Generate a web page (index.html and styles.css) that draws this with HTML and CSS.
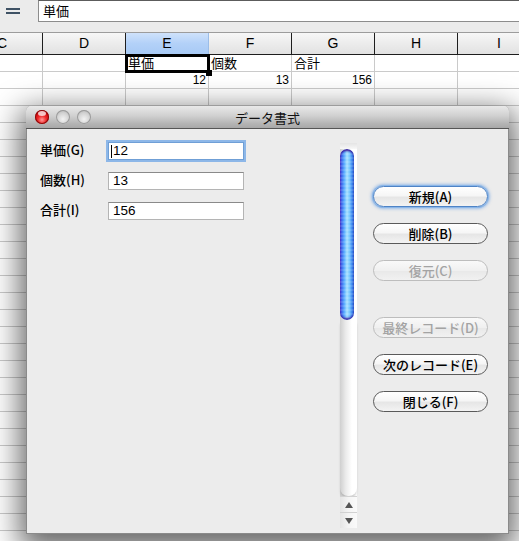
FILE: index.html
```html
<!DOCTYPE html>
<html lang="ja">
<head>
<meta charset="utf-8">
<title>データ書式</title>
<link rel="stylesheet" href="styles.css">
</head>
<body>
<div class="toolbar">
  <div class="eq"><span></span><span></span></div>
  <div class="formula">単価</div>
</div>
<div class="sheet">
  <div class="grid">
    <div class="hc">C</div><div class="hc">D</div><div class="hc sel">E</div><div class="hc">F</div><div class="hc">G</div><div class="hc">H</div><div class="hc">I</div>
    <div class="c"></div><div class="c"></div><div class="c cur">単価<span class="handle"></span></div><div class="c">個数</div><div class="c">合計</div><div class="c"></div><div class="c"></div>
    <div class="c"></div><div class="c"></div><div class="c num">12</div><div class="c num">13</div><div class="c num">156</div><div class="c"></div><div class="c"></div>
    <div class="c"></div><div class="c"></div><div class="c"></div><div class="c"></div><div class="c"></div><div class="c"></div><div class="c"></div>
    <div class="c"></div><div class="c"></div><div class="c"></div><div class="c"></div><div class="c"></div><div class="c"></div><div class="c"></div>
    <div class="c"></div><div class="c"></div><div class="c"></div><div class="c"></div><div class="c"></div><div class="c"></div><div class="c"></div>
    <div class="c"></div><div class="c"></div><div class="c"></div><div class="c"></div><div class="c"></div><div class="c"></div><div class="c"></div>
    <div class="c"></div><div class="c"></div><div class="c"></div><div class="c"></div><div class="c"></div><div class="c"></div><div class="c"></div>
    <div class="c"></div><div class="c"></div><div class="c"></div><div class="c"></div><div class="c"></div><div class="c"></div><div class="c"></div>
    <div class="c"></div><div class="c"></div><div class="c"></div><div class="c"></div><div class="c"></div><div class="c"></div><div class="c"></div>
    <div class="c"></div><div class="c"></div><div class="c"></div><div class="c"></div><div class="c"></div><div class="c"></div><div class="c"></div>
    <div class="c"></div><div class="c"></div><div class="c"></div><div class="c"></div><div class="c"></div><div class="c"></div><div class="c"></div>
    <div class="c"></div><div class="c"></div><div class="c"></div><div class="c"></div><div class="c"></div><div class="c"></div><div class="c"></div>
    <div class="c"></div><div class="c"></div><div class="c"></div><div class="c"></div><div class="c"></div><div class="c"></div><div class="c"></div>
    <div class="c"></div><div class="c"></div><div class="c"></div><div class="c"></div><div class="c"></div><div class="c"></div><div class="c"></div>
    <div class="c"></div><div class="c"></div><div class="c"></div><div class="c"></div><div class="c"></div><div class="c"></div><div class="c"></div>
    <div class="c"></div><div class="c"></div><div class="c"></div><div class="c"></div><div class="c"></div><div class="c"></div><div class="c"></div>
    <div class="c"></div><div class="c"></div><div class="c"></div><div class="c"></div><div class="c"></div><div class="c"></div><div class="c"></div>
    <div class="c"></div><div class="c"></div><div class="c"></div><div class="c"></div><div class="c"></div><div class="c"></div><div class="c"></div>
    <div class="c"></div><div class="c"></div><div class="c"></div><div class="c"></div><div class="c"></div><div class="c"></div><div class="c"></div>
    <div class="c"></div><div class="c"></div><div class="c"></div><div class="c"></div><div class="c"></div><div class="c"></div><div class="c"></div>
    <div class="c"></div><div class="c"></div><div class="c"></div><div class="c"></div><div class="c"></div><div class="c"></div><div class="c"></div>
    <div class="c"></div><div class="c"></div><div class="c"></div><div class="c"></div><div class="c"></div><div class="c"></div><div class="c"></div>
    <div class="c"></div><div class="c"></div><div class="c"></div><div class="c"></div><div class="c"></div><div class="c"></div><div class="c"></div>
    <div class="c"></div><div class="c"></div><div class="c"></div><div class="c"></div><div class="c"></div><div class="c"></div><div class="c"></div>
    <div class="c"></div><div class="c"></div><div class="c"></div><div class="c"></div><div class="c"></div><div class="c"></div><div class="c"></div>
    <div class="c"></div><div class="c"></div><div class="c"></div><div class="c"></div><div class="c"></div><div class="c"></div><div class="c"></div>
    <div class="c"></div><div class="c"></div><div class="c"></div><div class="c"></div><div class="c"></div><div class="c"></div><div class="c"></div>
    <div class="c"></div><div class="c"></div><div class="c"></div><div class="c"></div><div class="c"></div><div class="c"></div><div class="c"></div>
  </div>
</div>

<div class="dialog">
  <div class="titlebar">
    <div class="lights"><span class="light red"></span><span class="light gray"></span><span class="light gray"></span></div>
    <span class="title">データ書式</span>
  </div>
  <div class="dbody">
    <div class="form">
      <div class="frow"><span class="lbl">単価(G)</span><div class="field focus"><span class="caret"></span>12</div></div>
      <div class="frow"><span class="lbl">個数(H)</span><div class="field">13</div></div>
      <div class="frow"><span class="lbl">合計(I)</span><div class="field">156</div></div>
    </div>
    <div class="scroll">
      <div class="sb-cap"></div>
      <div class="sb-thumb"></div>
      <div class="sb-rest"></div>
      <div class="sb-arrow"><span class="tri up"></span></div>
      <div class="sb-arrow"><span class="tri down"></span></div>
    </div>
    <div class="buttons">
      <div class="btn default">新規(A)</div>
      <div class="btn">削除(B)</div>
      <div class="btn disabled">復元(C)</div>
      <div class="btn disabled group">最終レコード(D)</div>
      <div class="btn">次のレコード(E)</div>
      <div class="btn">閉じる(F)</div>
    </div>
  </div>
</div>
</body>
</html>
```

FILE: styles.css
```css
* { box-sizing: border-box; }
html, body { margin: 0; padding: 0; }
body {
  width: 519px;
  height: 541px;
  overflow: hidden;
  position: relative;
  background: #fff;
  font-family: "Liberation Sans", "Noto Sans CJK JP", sans-serif;
  color: #000;
}

/* formula bar */
.toolbar {
  height: 32px;
  background: #ebebeb;
  display: flex;
  align-items: flex-start;
}
.eq {
  width: 38px;
  height: 22px;
  display: flex;
  flex-direction: column;
  justify-content: center;
  align-items: center;
  gap: 2px;
  padding-right: 12px;
}
.eq span {
  width: 14px;
  height: 2px;
  background: #3e5164;
}
.formula {
  flex: 1;
  height: 22px;
  background: #fff;
  border: 1px solid #8c8c8c;
  border-top-color: #5c5c5c;
  border-right: none;
  padding-left: 4px;
  font: 13px/20px "Noto Sans CJK JP", sans-serif;
}

/* sheet */
.sheet {
  overflow: hidden;
  border-top: 1px solid #9c9c9c;
}
.grid {
  margin-left: -38px;
  width: 581px;
  display: grid;
  grid-template-columns: 81px repeat(6, 83px);
}
.hc {
  height: 22px;
  background: linear-gradient(#f7f7f7, #ececec 50%, #e2e2e2);
  border-right: 1px solid #1e1e1e;
  border-bottom: 1px solid #1e1e1e;
  text-align: center;
  font: 14px/21px "Liberation Sans", sans-serif;
}
.hc.sel {
  background: linear-gradient(#cfe2fb, #b3d1f8 50%, #a8caf5);
  border-right-color: #9bbde8;
}
.c {
  position: relative;
  height: 17px;
  border-right: 1px solid #cacaca;
  border-bottom: 1px solid #cacaca;
  padding: 0 2px;
  white-space: nowrap;
  font: 13px/16px "Noto Sans CJK JP", sans-serif;
}
.c.num {
  text-align: right;
  font: 12px/17px "Liberation Sans", sans-serif;
}
.c.cur {
  outline: 3px solid #000;
  outline-offset: -2px;
  z-index: 1;
}
.handle {
  position: absolute;
  right: -4px;
  bottom: -5px;
  width: 6px;
  height: 6px;
  background: #000;
}

/* dialog window */
.dialog {
  position: absolute;
  left: 26px;
  top: 106px;
  width: 483px;
  height: 428px;
  background: #ececec;
  border: 1px solid #8a8a8a;
  border-top: none;
  border-radius: 5px 5px 0 0;
  box-shadow: 0 10px 30px 6px rgba(0, 0, 0, 0.6);
  display: flex;
  flex-direction: column;
  z-index: 5;
}
.titlebar {
  position: relative;
  height: 23px;
  margin: 0 -1px;
  border-radius: 5px 5px 0 0;
  background: linear-gradient(#e9e9e9, #d0d0d0 45%, #b4b4b4 80%, #a8a8a8);
  border-bottom: 1px solid #555;
  display: flex;
  align-items: center;
  justify-content: center;
  font: 13px "Noto Sans CJK JP", sans-serif;
  color: #111;
}
.lights {
  position: absolute;
  left: 9px;
  top: 4px;
  display: flex;
  gap: 7px;
}
.light {
  width: 14px;
  height: 14px;
  border-radius: 50%;
}
.red {
  background: radial-gradient(circle at 50% 70%, #ff9a9a 0, #f02a2a 35%, #c40008 70%, #7a0000 100%);
  box-shadow: inset 0 0 0 1px #8a0a0a;
  position: relative;
}
.red::after {
  content: "";
  position: absolute;
  left: 3px;
  top: 1px;
  width: 8px;
  height: 5px;
  border-radius: 50%;
  background: rgba(255, 255, 255, 0.75);
}
.gray {
  background: radial-gradient(circle at 50% 65%, #f2f2f2 0, #d4d4d4 50%, #aaaaaa 100%);
  box-shadow: inset 0 0 0 1px #9a9a9a;
}

.dbody {
  flex: 1;
  display: flex;
}
.form {
  width: 313px;
  padding: 13px 0 0 13px;
  display: flex;
  flex-direction: column;
  gap: 12px;
}
.frow {
  display: flex;
  align-items: center;
  height: 18px;
}
.lbl {
  width: 68px;
  margin-top: -3px;
  font: 500 13px "Noto Sans CJK JP", sans-serif;
}
.field {
  width: 136px;
  height: 18px;
  background: #fff;
  border: 1px solid #b4b4b4;
  border-top-color: #8a8a8a;
  padding-left: 4px;
  font: 13.5px/16px "Liberation Sans", sans-serif;
  display: flex;
  align-items: center;
}
.field.focus {
  border-color: #6f9fd6;
  box-shadow: 0 0 0 2px #8db7e8;
  padding-left: 2px;
}
.caret {
  width: 1px;
  height: 13px;
  background: #000;
  margin-right: 1px;
}

/* scrollbar */
.scroll {
  margin-top: 14px;
  width: 17px;
  height: 385px;
  display: flex;
  flex-direction: column;
  background: linear-gradient(to right, #cfcfcf, #ececec 35%, #fff 70%, #fff);
}
.sb-cap {
  height: 6px;
  background: linear-gradient(#e4e4e4, #f8f8f8);
}
.sb-thumb {
  width: 14px;
  height: 171px;
  border-radius: 7px;
  background:
    repeating-linear-gradient(rgba(255,255,255,0.12) 0 2px, rgba(0,0,0,0) 2px 4px),
    linear-gradient(to right, #4a34c8 0, #3d6ff0 14%, #5fb0ff 32%, #a9e2ff 50%, #78c6ff 68%, #3c86ef 86%, #2a55c8 100%);
  box-shadow: inset 0 3px 2px -1px #3a1a9a, inset 0 -3px 2px -1px #3a2aa8;
}
.sb-rest {
  flex: 1;
  border-bottom-left-radius: 8px;
  border-bottom-right-radius: 8px;
  box-shadow: 0 3px 3px -1px rgba(0, 0, 0, 0.25);
}
.sb-arrow {
  height: 16px;
  display: flex;
  align-items: center;
  justify-content: center;
  background: linear-gradient(to right, #e4e4e4, #f4f4f4 50%, #fafafa);
  border-top: 1px solid #d2d2d2;
}
.tri {
  width: 0;
  height: 0;
  border-left: 4px solid transparent;
  border-right: 4px solid transparent;
}
.tri.up { border-bottom: 6px solid #555; }
.tri.down { border-top: 6px solid #555; }

/* buttons */
.buttons {
  margin-left: 16px;
  padding-top: 57px;
  display: flex;
  flex-direction: column;
  gap: 16px;
}
.btn {
  width: 115px;
  height: 21px;
  border-radius: 11px;
  border: 1px solid #5a5a5a;
  background: linear-gradient(#ffffff, #f6f6f6 45%, #e6e6e6 55%, #f3f3f3);
  text-align: center;
  font: 500 13px/19px "Noto Sans CJK JP", sans-serif;
  color: #000;
}
.btn.default {
  border-color: #4e83c6;
  box-shadow: 0 0 0 1px #8ab6e8, 0 0 3px 2px rgba(90, 150, 225, 0.55);
}
.btn.disabled {
  border-color: #bdbdbd;
  background: linear-gradient(#f9f9f9, #f0f0f0 50%, #e9e9e9 55%, #f1f1f1);
  color: #a3a3a3;
}
.btn.group {
  margin-top: 20px;
}
```
